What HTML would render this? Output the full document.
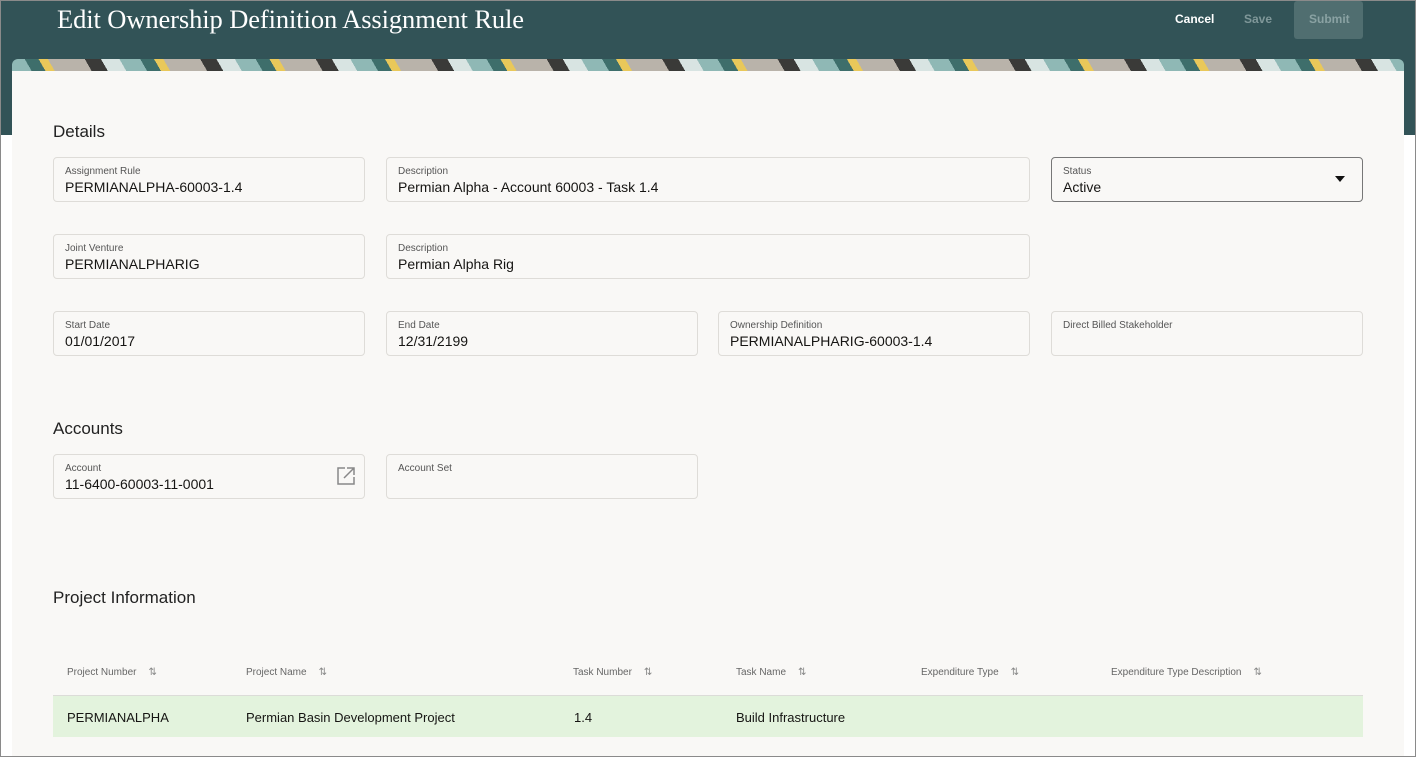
<!DOCTYPE html>
<html><head><style>
*{box-sizing:border-box;margin:0;padding:0}
body{width:1416px;height:757px;overflow:hidden;background:#fff;font-family:"Liberation Sans",sans-serif;position:relative}
.frame{position:absolute;left:0;top:0;width:1416px;height:757px;border:1px solid #8a8a8a;pointer-events:none}
.hdr{position:absolute;left:0;top:0;width:1416px;height:135px;background:#325357}
.title{position:absolute;left:57px;top:4px;font-family:"Liberation Serif",serif;font-size:26.5px;color:#fff;letter-spacing:-0.1px}
.btn{position:absolute;top:12px;font-size:12px;font-weight:bold}
.banner{position:absolute;left:12px;top:59px;width:1392px;height:14px;border-radius:6px 6px 0 0;overflow:hidden;background:repeating-linear-gradient(60deg,#8fb8b5 0 18px,#3e6e6b 18px 30px,#e9c85a 30px 38px,#b9b3aa 38px 70px,#3a3a38 70px 84px,#d8e4e2 84px 100px)}
.card{position:absolute;left:12px;top:71px;width:1392px;height:686px;background:#f9f8f6}
.h{position:absolute;font-size:17px;color:#222}
.f{position:absolute;height:45px;border:1px solid #dedcd8;border-radius:4px;background:#f9f8f6}
.f .l{position:absolute;left:11px;top:8px;font-size:10px;color:#555}
.f .v{position:absolute;left:11px;top:21px;font-size:14px;color:#161513}
.th{position:absolute;top:667px;font-size:10px;color:#666}
.th span{margin-left:12px;color:#888}
.td{position:absolute;top:710px;font-size:13px;color:#161513}
</style></head><body>
<div class="hdr"></div>
<div class="title">Edit Ownership Definition Assignment Rule</div>
<div class="btn" style="left:1175px;color:#fff">Cancel</div>
<div class="btn" style="left:1244px;color:#7f9799">Save</div>
<div style="position:absolute;left:1294px;top:1px;width:69px;height:38px;background:#506e70;border-radius:3px"></div>
<div class="btn" style="left:1309px;color:#8aa2a3">Submit</div>
<div class="banner"></div>
<div class="card"></div>
<div class="h" style="left:53px;top:122px">Details</div>
<div class="f" style="left:53px;top:157px;width:312px"><div class="l">Assignment Rule</div><div class="v">PERMIANALPHA-60003-1.4</div></div>
<div class="f" style="left:386px;top:157px;width:644px"><div class="l">Description</div><div class="v">Permian Alpha - Account 60003 - Task 1.4</div></div>
<div class="f" style="left:1051px;top:157px;width:312px;border-color:#777"><div class="l">Status</div><div class="v">Active</div><div style="position:absolute;right:17px;top:18px;border:5px solid transparent;border-top:6px solid #111;border-bottom:0"></div></div>
<div class="f" style="left:53px;top:234px;width:312px"><div class="l">Joint Venture</div><div class="v">PERMIANALPHARIG</div></div>
<div class="f" style="left:386px;top:234px;width:644px"><div class="l">Description</div><div class="v">Permian Alpha Rig</div></div>
<div class="f" style="left:53px;top:311px;width:312px"><div class="l">Start Date</div><div class="v">01/01/2017</div></div>
<div class="f" style="left:386px;top:311px;width:312px"><div class="l">End Date</div><div class="v">12/31/2199</div></div>
<div class="f" style="left:718px;top:311px;width:312px"><div class="l">Ownership Definition</div><div class="v">PERMIANALPHARIG-60003-1.4</div></div>
<div class="f" style="left:1051px;top:311px;width:312px"><div class="l">Direct Billed Stakeholder</div></div>
<div class="h" style="left:53px;top:419px">Accounts</div>
<div class="f" style="left:53px;top:454px;width:312px"><div class="l">Account</div><div class="v">11-6400-60003-11-0001</div>
<svg style="position:absolute;left:282px;top:11px" width="20" height="20" viewBox="0 0 20 20" fill="none" stroke="#888" stroke-width="1.5"><path d="M9 2H2v16h16v-7M11 2h7v7M18 2L8 12"/></svg></div>
<div class="f" style="left:386px;top:454px;width:312px"><div class="l">Account Set</div></div>
<div class="h" style="left:53px;top:588px">Project Information</div>
<div class="th" style="left:67px">Project Number<span>⇅</span></div>
<div class="th" style="left:246px">Project Name<span>⇅</span></div>
<div class="th" style="left:573px">Task Number<span>⇅</span></div>
<div class="th" style="left:736px">Task Name<span>⇅</span></div>
<div class="th" style="left:921px">Expenditure Type<span>⇅</span></div>
<div class="th" style="left:1111px">Expenditure Type Description<span>⇅</span></div>
<div style="position:absolute;left:53px;top:695px;width:1310px;height:42px;background:#e3f3dd;border-top:1px solid #dcdcd8"></div>
<div class="td" style="left:67px">PERMIANALPHA</div>
<div class="td" style="left:246px">Permian Basin Development Project</div>
<div class="td" style="left:574px">1.4</div>
<div class="td" style="left:736px">Build Infrastructure</div>
<div class="frame"></div>
</body></html>
